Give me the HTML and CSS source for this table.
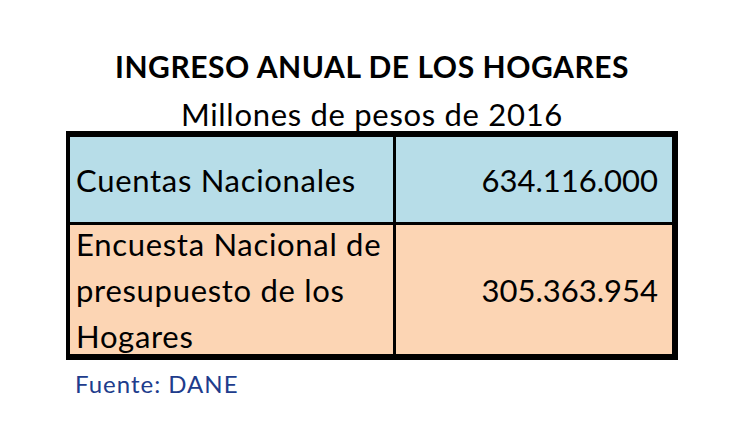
FILE: index.html
```html
<!DOCTYPE html>
<html lang="es">
<head>
<meta charset="utf-8">
<title>Ingreso anual de los hogares</title>
<link rel="stylesheet" href="styles.css">
</head>
<body>
<div class="page">
  <h1 class="title">INGRESO ANUAL DE LOS HOGARES</h1>
  <p class="subtitle">Millones de pesos de 2016</p>
  <div class="table">
    <div class="cell label blue">Cuentas Nacionales</div>
    <div class="cell value blue">634.116.000</div>
    <div class="cell label peach last">Encuesta Nacional de presupuesto de los Hogares</div>
    <div class="cell value peach last">305.363.954</div>
  </div>
  <p class="source">Fuente: DANE</p>
</div>
</body>
</html>
```
FILE: styles.css
```css
html, body {
  margin: 0;
  padding: 0;
  background: #ffffff;
}

body {
  font-family: Lato, "Open Sans", "Liberation Sans", sans-serif;
  color: #000000;
}

.page {
  width: 612px;
  margin-left: 66px;
  padding-top: 49px;
}

.title {
  margin: 0;
  font-size: 30px;
  font-weight: 700;
  line-height: 34px;
  letter-spacing: 0.55px;
  text-align: center;
}

.subtitle {
  margin: 14px 0 0;
  font-size: 31px;
  font-weight: 400;
  line-height: 34px;
  letter-spacing: 0.7px;
  text-align: center;
}

.table {
  display: grid;
  grid-template-columns: 326px 1fr;
  grid-template-rows: 88px 129px;
  border-style: solid;
  border-color: #000000;
  border-width: 6px 6px 6px 4px;
}

.cell {
  display: flex;
  align-items: center;
  font-size: 31px;
  line-height: 46px;
  border-bottom: 3px solid #000000;
}

.cell.last {
  border-bottom: none;
}

.label {
  padding-left: 6px;
  padding-right: 2px;
  letter-spacing: 0.7px;
  border-right: 3px solid #000000;
}

.value {
  justify-content: flex-end;
  padding-right: 14px;
}

.blue {
  background: #b7dde8;
}

.peach {
  background: #fcd5b4;
}

.source {
  margin: 9px 0 0;
  padding-left: 9px;
  font-size: 24px;
  line-height: 30px;
  letter-spacing: 1px;
  color: #203c8c;
}
```
